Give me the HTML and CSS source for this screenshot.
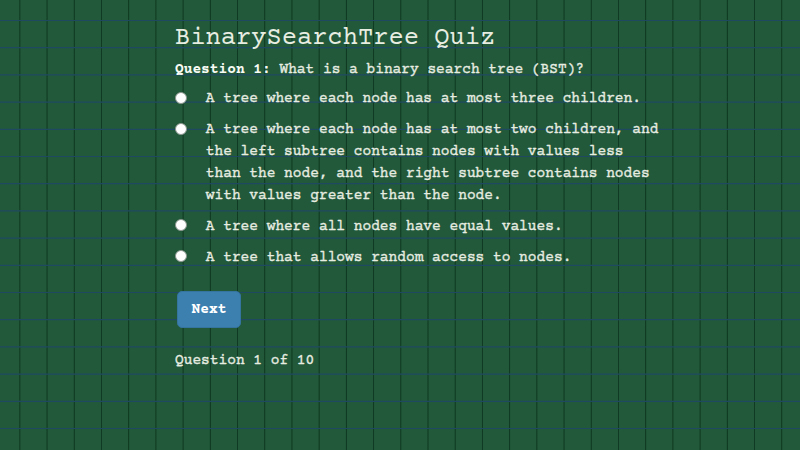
FILE: index.html
```html
<!DOCTYPE html>
<html lang="en">
<head>
<meta charset="utf-8">
<title>BinarySearchTree Quiz</title>
<link rel="stylesheet" href="styles.css">
</head>
<body>
<main class="quiz">
  <h1 class="title">BinarySearchTree Quiz</h1>
  <p class="question"><strong>Question 1:</strong> What is a binary search tree (BST)?</p>
  <div class="options">
    <label class="option"><input type="radio" name="answer"><span>A tree where each node has at most three children.</span></label>
    <label class="option"><input type="radio" name="answer"><span>A tree where each node has at most two children, and the left subtree contains nodes with values less than the node, and the right subtree contains nodes with values greater than the node.</span></label>
    <label class="option"><input type="radio" name="answer"><span>A tree where all nodes have equal values.</span></label>
    <label class="option"><input type="radio" name="answer"><span>A tree that allows random access to nodes.</span></label>
  </div>
  <button class="next" type="button">Next</button>
  <p class="progress">Question 1 of 10</p>
</main>
</body>
</html>
```
FILE: styles.css
```css
* {
  box-sizing: border-box;
}

body {
  margin: 0;
  height: 450px;
  overflow: hidden;
  color: #e8ede2;
  font: 500 14.53px/21.9px "Courier Prime", "Nimbus Mono PS", "FreeMono", "Liberation Mono", monospace;
  -webkit-text-stroke: 0.35px currentColor;
  background-color: #21593a;
  background-image:
    repeating-linear-gradient(to bottom, transparent 0 19.5px, #1f4961 20.3px 20.7px, transparent 21.5px 27.2px),
    repeating-linear-gradient(to right, transparent 0 18.9px, #103b22 19.7px 20px, transparent 20.8px 27.21px);
}

.quiz {
  width: 490px;
  margin-left: 175px;
  padding-top: 24px;
}

.title {
  margin: 0;
  font-size: 25.45px;
  line-height: 30px;
  font-weight: 400;
  white-space: nowrap;
  -webkit-text-stroke: 0;
}

.question {
  margin: 6.4px 0 0;
}

.options {
  display: flex;
  flex-direction: column;
  gap: 8.9px;
  margin-top: 7.2px;
}

.option {
  display: flex;
  align-items: flex-start;
}

.option input {
  appearance: none;
  flex: none;
  width: 12px;
  height: 12px;
  margin: 2.4px 18.4px 0 0.4px;
  border: 1px solid #8b968e;
  border-radius: 50%;
  background: #fff;
}

.next {
  display: block;
  width: 64px;
  height: 37px;
  margin: 21.4px 0 0 2px;
  padding: 3px 0 0;
  border: 1px solid #35749f;
  border-radius: 5px;
  background: #3c80b0;
  color: #fff;
  font: inherit;
  font-weight: 700;
  -webkit-text-stroke: 0;
}

.question strong {
  color: #f8fbf4;
  -webkit-text-stroke: 0;
}

.progress {
  margin: 23px 0 0;
}
```
